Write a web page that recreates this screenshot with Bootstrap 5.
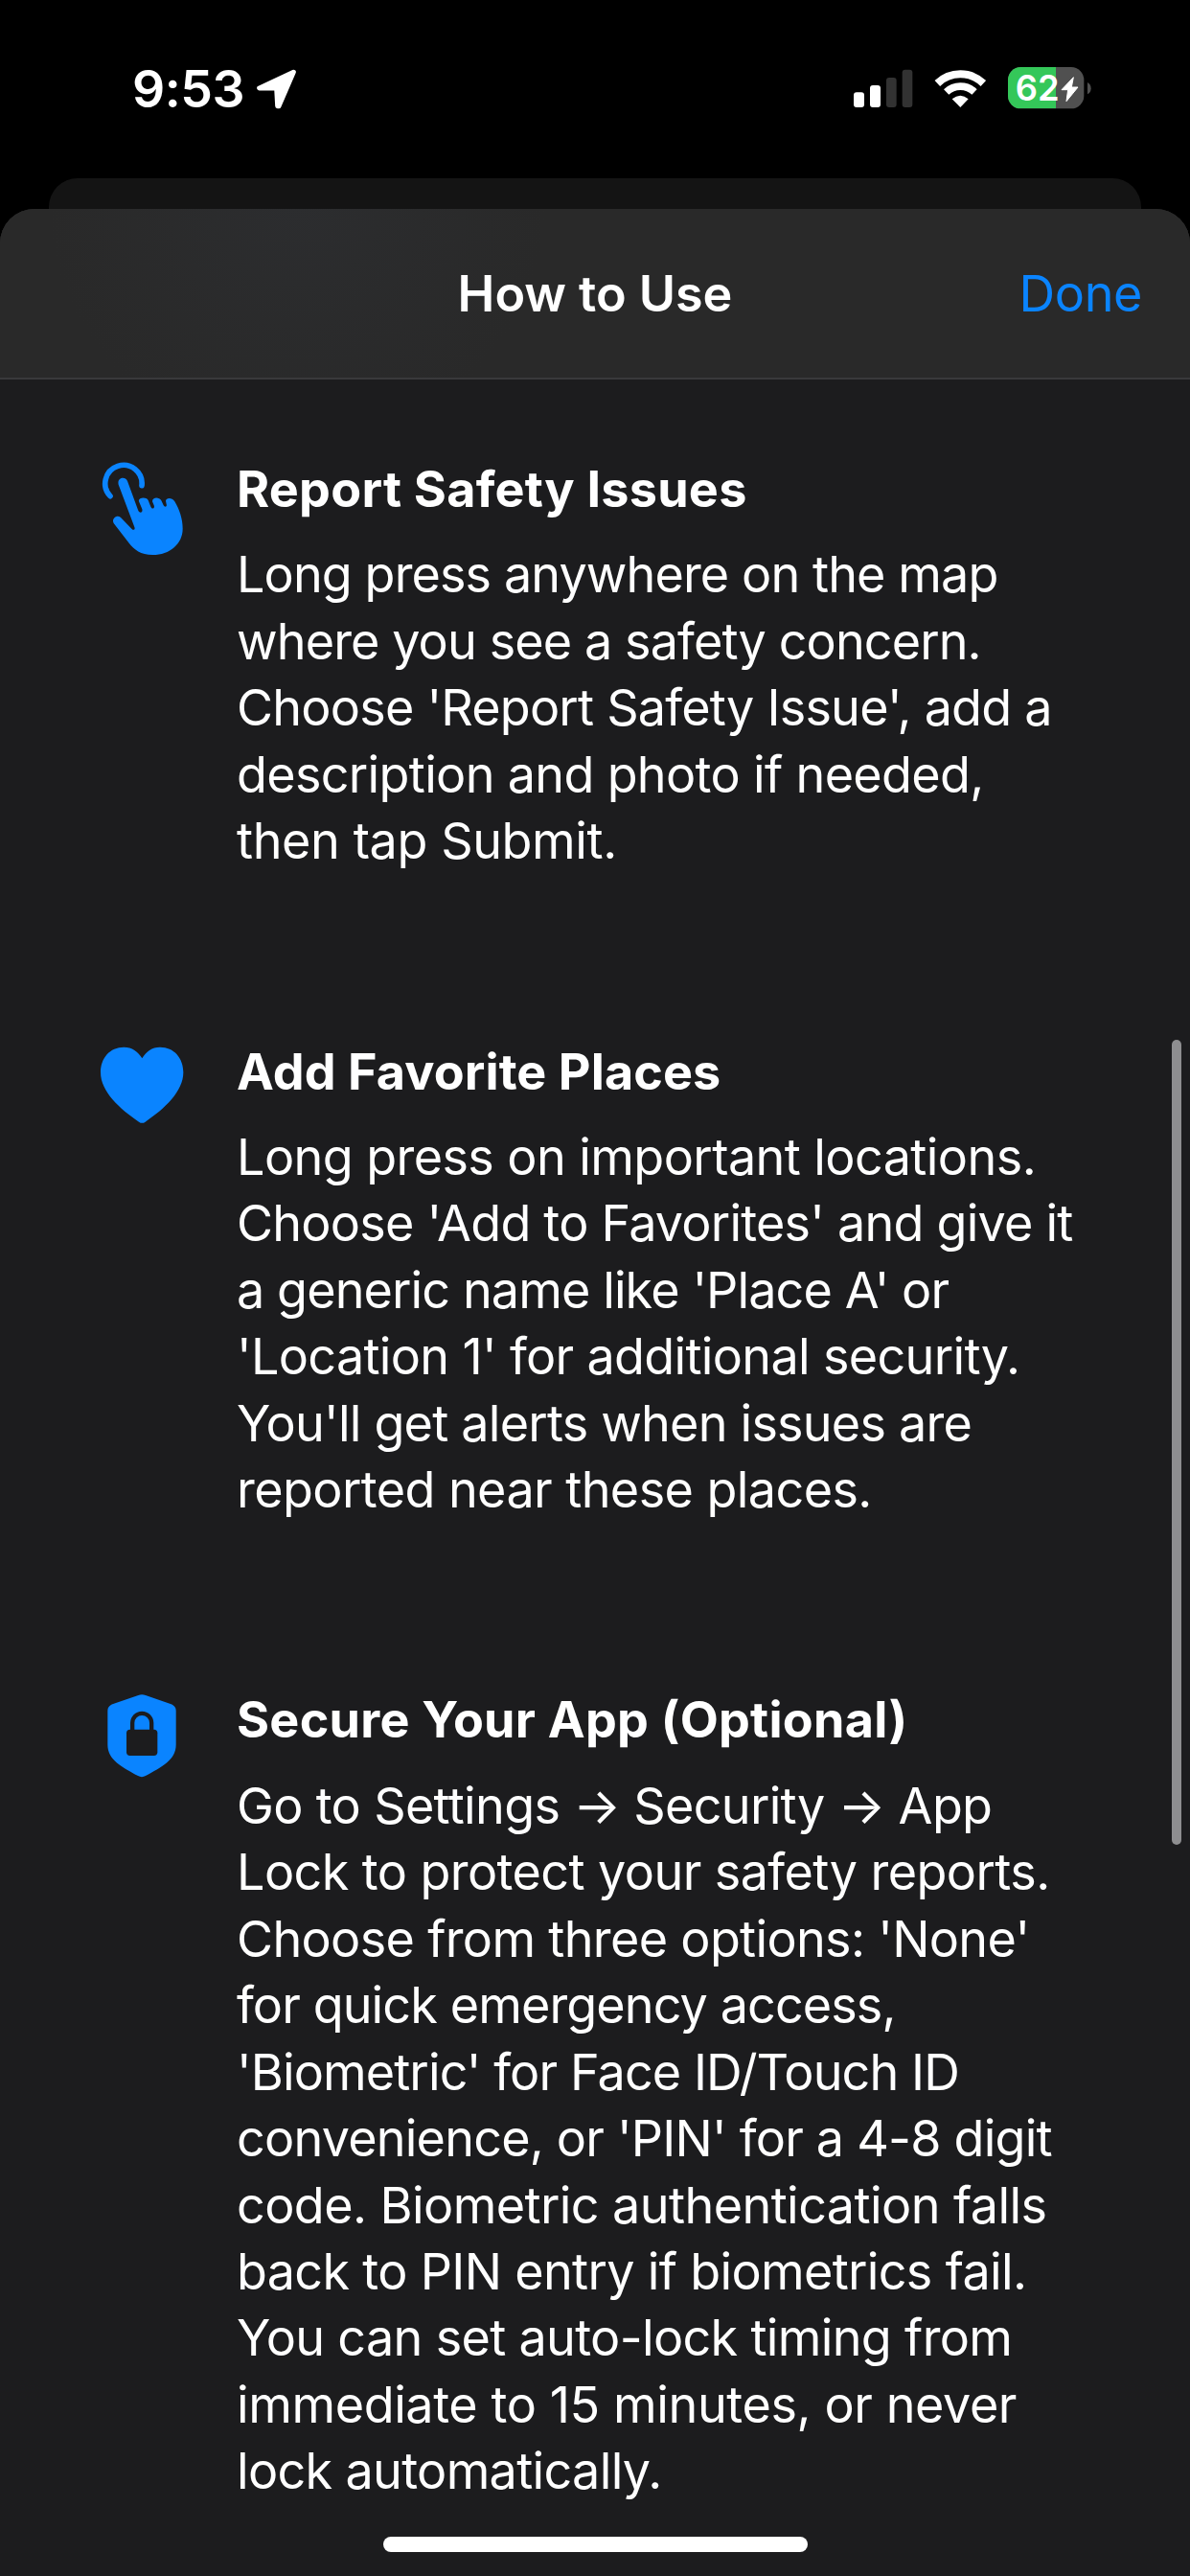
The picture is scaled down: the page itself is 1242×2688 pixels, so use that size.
<!DOCTYPE html>
<html lang="en" data-bs-theme="dark">
<head>
<meta charset="utf-8">
<meta name="viewport" content="width=device-width, initial-scale=1">
<title>How to Use</title>
<link href="https://cdn.jsdelivr.net/npm/bootstrap@5.3.0/dist/css/bootstrap.min.css" rel="stylesheet">
<style>
  :root { --accent: #0a84ff; --sheet: #1c1c1e; --pitch: 69.44px; }
  html, body { height: 2688px; overflow: hidden; background: #000; }
  body { font-family: Inter, "Liberation Sans", sans-serif; font-size: 52.1px; color: #fff; }
  .status-bar { height: 186px; padding: 50px 82px 0 120px; }
  .status-left { height: 90px; }
  .clock { font-size: 53.5px; font-weight: 600; line-height: 86px; letter-spacing: -.5px; width: 142px; padding-left: 18px; }
  .sheet-behind { height: 32px; margin: 0 51px; background: #141414; border-radius: 30px 30px 0 0; }
  .sheet { height: 2470px; background: var(--sheet); border-radius: 36px 36px 0 0; overflow: hidden; }
  .sheet-header { height: 178px; padding: 3px 50px 0 50px; background: radial-gradient(circle at 310px -10px, #2c2d2f 0, #292929 260px) #292929; border-bottom: 2px solid #39393b; }
  .sheet-header h1 { font-size: 52.1px; font-weight: 600; line-height: 1; letter-spacing: -.03px; padding-bottom: 1px; }
  .side-slot { width: 200px; }
  .done-link { color: var(--accent); font-size: 52.1px; line-height: 1; letter-spacing: -.4px; text-decoration: none; }
  .guide { padding: 80px 0 0 90px; gap: 170.9px; }
  .tip-icon { width: 140px; height: 120px; flex: none; }
  .tip-body { padding-left: 17px; line-height: var(--pitch); white-space: nowrap; }
  .tip-body h2 { font-size: 52.1px; font-weight: 700; line-height: var(--pitch); margin-bottom: 20px; letter-spacing: .25px; }
  .tip-body p { letter-spacing: -.67px; }
  .tip-body .h-snug { letter-spacing: .09px; }
  .t-w { letter-spacing: -.4px; }
  .t-a { letter-spacing: -.58px; }
  .t-b { letter-spacing: -.78px; }
  .t-c { letter-spacing: -.89px; }
  .scroll-thumb { right: 9px; top: 1085px; width: 10px; height: 840px; background: #8e8e90; }
  .home-bar { left: 400px; bottom: 25px; width: 443px; height: 16px; background: #fff; }
</style>
</head>
<body class="position-relative">

<header class="status-bar d-flex justify-content-between">
  <div class="status-left d-flex">
    <div class="clock">9:53</div>
    <svg width="52" height="90" viewBox="426 0 156 270"><path d="M559 76 452 126H506L509 182H513Z" fill="#fff" stroke="#fff" stroke-width="15" stroke-linejoin="round"/></svg>
  </div>
  <svg width="290" height="90" viewBox="0 0 870 270">
    <g fill="#fff"><rect x="63" y="139" width="33" height="47" rx="9"/><rect x="114" y="117" width="33" height="69" rx="9"/></g>
    <g fill="#323232"><rect x="165" y="93" width="32" height="93" rx="9"/><rect x="215" y="68" width="32" height="118" rx="9"/></g>
    <g fill="none" stroke="#fff">
      <path d="M325 111A104 104 0 0 1 469 111" stroke-width="24"/>
      <path d="M353 138A64 64 0 0 1 441 138" stroke-width="23"/>
    </g>
    <path d="M397 186 371 160Q397 138 422 160Z" fill="#fff"/>
    <clipPath id="charge"><rect x="546" y="60" width="150" height="130"/></clipPath>
    <rect x="546" y="60" width="238" height="130" rx="40" fill="#505050"/>
    <rect x="546" y="60" width="238" height="130" rx="40" fill="#34c759" clip-path="url(#charge)"/>
    <path d="M795 108Q806 114 806 126.500T795 145Z" fill="#505050"/>
    <text x="569" y="166" font-family="Inter, sans-serif" font-size="109" font-weight="600" fill="#fff" textLength="138">62</text>
    <path d="M751 92 714 131H734L729 167 765 123H745Z" fill="#fff" stroke="#fff" stroke-width="3" stroke-linejoin="round"/>
  </svg>
</header>

<div class="sheet-behind"></div>

<main class="sheet">
  <div class="sheet-header d-flex align-items-center justify-content-between">
    <div class="side-slot"></div>
    <h1 class="m-0">How to Use</h1>
    <div class="side-slot text-end"><a class="done-link" href="#">Done</a></div>
  </div>

  <div class="guide d-flex flex-column">
    <section class="d-flex">
      <svg class="tip-icon" viewBox="0 48 420 360">
        <path d="M75 173A57.500 57.500 0 1 1 174 140" fill="none" stroke="#0a84ff" stroke-width="17" stroke-linecap="round"/>
        <path d="M101 137C96 115 122 110 129 126L162 216C166 229 178 225 175 214L165 190C161 178 187 174 194 186L202 206C206 216 216 212 212 202L207 190C207 176 228 175 235 187L242 202C246 209 254 206 251 198L249 188C250 178 268 176 277 190C292 215 302 245 302 275C302 322 262 357 208 357C170 357 150 340 134 320L86 258C78 244 96 229 108 240L142 275C148 282 154 278 151 270Z" fill="#0a84ff"/>
      </svg>
      <div class="tip-body">
        <h2>Report Safety Issues</h2>
        <p class="m-0"><span class="t-c">Long press anywhere on the map</span><br><span class="t-c">where you see a safety concern.</span><br><span class="t-b">Choose 'Report Safety Issue', add a</span><br>description and photo if needed,<br><span class="t-w">then tap Submit.</span></p>
      </div>
    </section>

    <section class="d-flex">
      <svg class="tip-icon" viewBox="0 40 420 360">
        <path d="M175 101C187 80 206 66 231 66C275 66 304 100 304 145C304 205 245 259 185 300Q175 307 165 300C105 259 45 205 45 145C45 100 74 66 118 66C143 66 163 80 175 101Z" fill="#0a84ff"/>
      </svg>
      <div class="tip-body">
        <h2 class="h-snug">Add Favorite Places</h2>
        <p class="m-0"><span class="t-a">Long press on important locations.</span><br><span class="t-b">Choose 'Add to Favorites' and give it</span><br><span class="t-c">a generic name like 'Place A' or</span><br>'Location 1' for additional security.<br><span class="t-b">You'll get alerts when issues are</span><br><span class="t-a">reported near these places.</span></p>
      </div>
    </section>

    <section class="d-flex">
      <svg class="tip-icon" viewBox="0 33 420 360">
        <path d="M163 60Q174 55 186 60L266 88Q281 94 281 108V215C281 262 235 285 186 312Q174 319 162 312C113 285 67 262 67 215V108Q67 94 82 88Z" fill="#0a84ff"/>
        <rect x="126" y="167" width="97" height="82" rx="11" fill="#1c1c1e"/>
        <path d="M144.500 172V146.500A30 30 0 0 1 204.500 146.500V172" fill="none" stroke="#1c1c1e" stroke-width="13"/>
      </svg>
      <div class="tip-body">
        <h2>Secure Your App (Optional)</h2>
        <p class="m-0">Go to Settings → Security → App<br><span class="t-a">Lock to protect your safety reports.</span><br>Choose from three options: 'None'<br><span class="t-c">for quick emergency access,</span><br><span class="t-c">'Biometric' for Face ID/Touch ID</span><br><span class="t-b">convenience, or 'PIN' for a 4-8 digit</span><br><span class="t-a">code. Biometric authentication falls</span><br>back to PIN entry if biometrics fail.<br>You can set auto-lock timing from<br><span class="t-w">immediate to 15 minutes, or never</span><br>lock automatically.</p>
      </div>
    </section>
  </div>
</main>

<div class="scroll-thumb position-absolute rounded-pill"></div>
<div class="home-bar position-absolute rounded-pill"></div>

<script src="https://cdn.jsdelivr.net/npm/bootstrap@5.3.0/dist/js/bootstrap.bundle.min.js"></script>
</body>
</html>
